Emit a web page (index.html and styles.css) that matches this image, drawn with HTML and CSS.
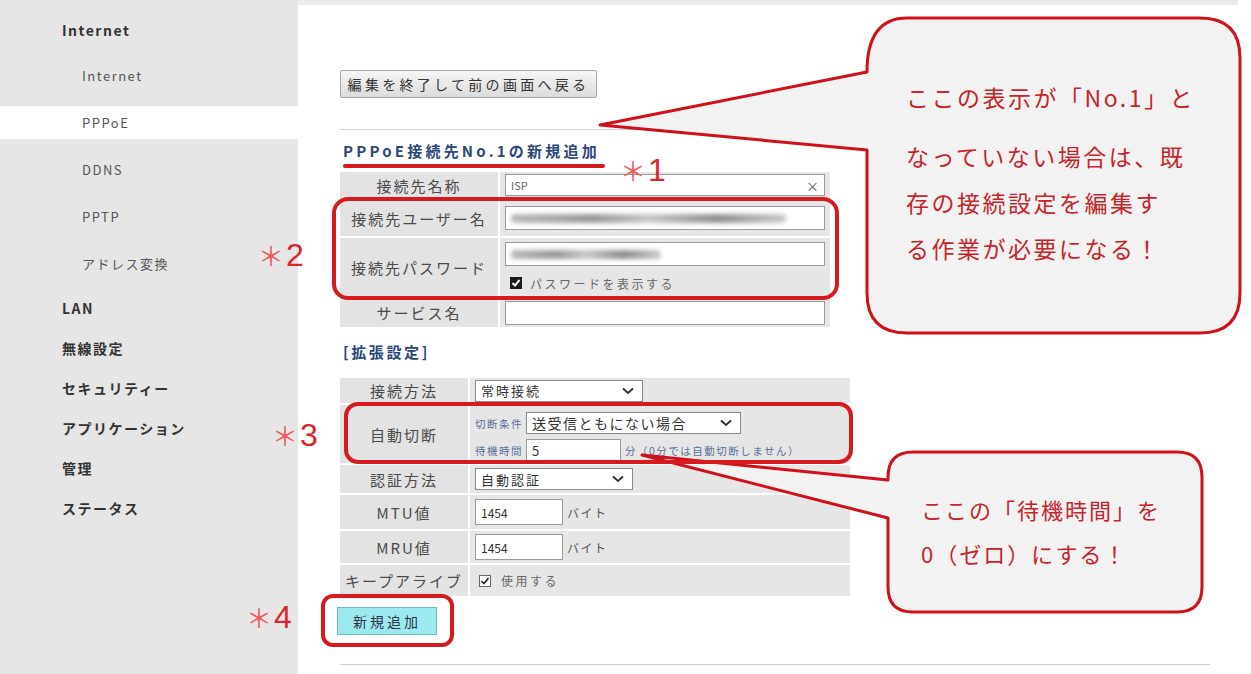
FILE: index.html
```html
<!DOCTYPE html>
<html lang="ja">
<head>
    <meta charset="UTF-8">
    <title>PPPoE接続先の新規追加</title>
    <link rel="stylesheet" href="styles.css">
</head>
<body>
    <div class="page">
        <!-- Sidebar -->
        <nav class="side">
            <div class="nav-top">Internet</div>
            <div class="nav-group">
                <div class="nav-sub">Internet</div>
                <div class="nav-sub active">PPPoE</div>
                <div class="nav-sub">DDNS</div>
                <div class="nav-sub">PPTP</div>
                <div class="nav-sub">アドレス変換</div>
            </div>
            <div class="nav-top">LAN</div>
            <div class="nav-top">無線設定</div>
            <div class="nav-top">セキュリティー</div>
            <div class="nav-top">アプリケーション</div>
            <div class="nav-top">管理</div>
            <div class="nav-top">ステータス</div>
        </nav>

        <!-- Main -->
        <main class="main">
            <div class="topband"></div>
            <div class="content">
                <button class="back-btn">編集を終了して前の画面へ戻る</button>
                <div class="rule"></div>
                <h2 class="heading">PPPoE接続先No.1の新規追加</h2>

                <div class="form form-basic">
                    <div class="label">接続先名称</div>
                    <div class="value">
                        <div class="field field-name"><span class="isp">ISP</span><span class="clear">×</span></div>
                    </div>
                    <div class="label">接続先ユーザー名</div>
                    <div class="value">
                        <div class="field field-wide"><span class="blur blur-user"></span></div>
                    </div>
                    <div class="label">接続先パスワード</div>
                    <div class="value value-stack">
                        <div class="field field-wide"><span class="blur blur-pass"></span></div>
                        <label class="check-row"><span class="check check-dark">
                            <svg width="10" height="10" viewBox="0 0 10 10"><polyline points="1.5,5 4,7.5 8.5,2" fill="none" stroke="#fff" stroke-width="2"/></svg>
                        </span>パスワードを表示する</label>
                    </div>
                    <div class="label">サービス名</div>
                    <div class="value">
                        <div class="field field-wide"></div>
                    </div>
                </div>

                <h3 class="sub-heading">[拡張設定]</h3>

                <div class="form form-ext">
                    <div class="label">接続方法</div>
                    <div class="value">
                        <div class="select select-mode">常時接続<svg class="chev" width="12" height="8" viewBox="0 0 12 8"><polyline points="1,1.5 6,6 11,1.5" fill="none" stroke="#333" stroke-width="2"/></svg></div>
                    </div>
                    <div class="label">自動切断</div>
                    <div class="value value-stack tight">
                        <div class="line">
                            <span class="mini">切断条件</span>
                            <div class="select select-cond">送受信ともにない場合<svg class="chev" width="12" height="8" viewBox="0 0 12 8"><polyline points="1,1.5 6,6 11,1.5" fill="none" stroke="#333" stroke-width="2"/></svg></div>
                        </div>
                        <div class="line">
                            <span class="mini">待機時間</span>
                            <div class="field field-wait">5</div>
                            <span class="mini hint">分（0分では自動切断しません）</span>
                        </div>
                    </div>
                    <div class="label">認証方法</div>
                    <div class="value">
                        <div class="select select-auth">自動認証<svg class="chev" width="12" height="8" viewBox="0 0 12 8"><polyline points="1,1.5 6,6 11,1.5" fill="none" stroke="#333" stroke-width="2"/></svg></div>
                    </div>
                    <div class="label">MTU値</div>
                    <div class="value">
                        <div class="field field-num">1454</div><span class="unit">バイト</span>
                    </div>
                    <div class="label">MRU値</div>
                    <div class="value">
                        <div class="field field-num">1454</div><span class="unit">バイト</span>
                    </div>
                    <div class="label">キープアライブ</div>
                    <div class="value">
                        <label class="check-row keep"><span class="check check-light">
                            <svg width="10" height="10" viewBox="0 0 10 10"><polyline points="1.5,5 4,7.5 8.5,2" fill="none" stroke="#222" stroke-width="1.6"/></svg>
                        </span>使用する</label>
                    </div>
                </div>

                <button class="add-btn">新規追加</button>
                <div class="rule rule-bottom"></div>
            </div>
        </main>
    </div>

    <!-- Annotations drawn over the page -->
    <svg class="marks" width="1251" height="674" viewBox="0 0 1251 674">
        <path class="callout" d="M 907 18 H 1200 Q 1240 18 1240 58 V 293 Q 1240 333 1200 333 H 907 Q 867 333 867 293 V 150 L 600 125 L 867 72 Q 867 18 907 18 Z"/>
        <path class="callout" d="M 913 452 H 1177 Q 1202 452 1202 477 V 587 Q 1202 612 1177 612 H 913 Q 888 612 888 587 V 518 L 642 455 L 888 480 V 477 Q 888 452 913 452 Z"/>
        <rect x="343" y="164" width="262" height="4" rx="2" fill="#d71920"/>
        <rect class="ring" x="334" y="199" width="503" height="99" rx="14"/>
        <rect class="ring" x="346" y="404" width="505" height="58" rx="12"/>
        <rect class="ring" x="323" y="596" width="129" height="49" rx="10"/>
    </svg>

    <div class="note note-1">
        <div class="note-first">ここの表示が「No.1」と</div>
        <div>なっていない場合は、既</div>
        <div>存の接続設定を編集す</div>
        <div>る作業が必要になる！</div>
    </div>
    <div class="note note-2">
        <div>ここの「待機時間」を</div>
        <div>0（ゼロ）にする！</div>
    </div>

    <span class="star star-1"><span class="ast">＊</span>1</span>
    <span class="star star-2"><span class="ast">＊</span>2</span>
    <span class="star star-3"><span class="ast">＊</span>3</span>
    <span class="star star-4"><span class="ast">＊</span>4</span>
</body>
</html>
```

FILE: styles.css
```css
body { margin: 0; font-family: "Noto Sans CJK JP", "Noto Sans", sans-serif; background: #fff; color: #444; position: relative; }
.page { display: flex; width: 1251px; height: 674px; overflow: hidden; }

/* sidebar */
.side { width: 298px; flex: none; background: #e6e6e6; padding-top: 10px; box-sizing: border-box; }
.nav-top { height: 40px; line-height: 40px; padding-left: 62px; font-size: 14px; font-weight: bold; letter-spacing: 1.5px; color: #333; }
.nav-group { display: flex; flex-direction: column; gap: 14px; padding: 9px 0 8px; }
.nav-sub { height: 33px; line-height: 33px; padding-left: 82px; font-size: 13px; letter-spacing: 1.5px; color: #555; }
.nav-sub.active { background: #fff; }

/* main */
.main { width: 940px; flex: none; }
.topband { height: 5px; background: #ebebeb; }
.content { display: flex; flex-direction: column; align-items: flex-start; padding: 0 28px 0 42px; }
.back-btn { margin-top: 65px; width: 257px; height: 28px; padding: 0; border: 1px solid #a8a8a8; border-radius: 2px; background: linear-gradient(#f6f6f6, #dcdcdc); font-family: inherit; font-size: 14px; letter-spacing: 3.3px; color: #333; }
.rule { align-self: stretch; height: 1px; margin-top: 31px; background: #cfcfcf; }
.heading { margin: 10px 0 0 3px; height: 22px; line-height: 22px; font-size: 15px; font-weight: bold; letter-spacing: 3.2px; color: #2b4778; }
.sub-heading { margin: 15px 0 0 3px; height: 20px; line-height: 20px; font-size: 15px; font-weight: bold; letter-spacing: 2.6px; color: #2b4778; }

/* forms */
.form { display: grid; gap: 2px; background: #fff; }
.form-basic { margin-top: 10px; grid-template-columns: 158px 330px; grid-template-rows: 26px 36px 58px 29px; }
.form-ext { margin-top: 16px; grid-template-columns: 128px 380px; grid-template-rows: 25px 58px 28px 34px 32px 31px; }
.label { background: #e3e3e3; display: flex; align-items: center; justify-content: center; font-size: 15px; letter-spacing: 2px; color: #4a4a4a; white-space: nowrap; }
.value { background: #e6e6e6; display: flex; align-items: center; padding-left: 5px; }
.value-stack { flex-direction: column; align-items: flex-start; justify-content: flex-start; padding-top: 4px; gap: 8px; }
.value-stack.tight { padding-top: 7px; gap: 5px; }

.field { box-sizing: border-box; height: 24px; background: #fff; border: 1px solid #9a9a9a; display: flex; align-items: center; padding: 0 5px; font-size: 13px; color: #333; position: relative; overflow: hidden; }
.field-name { width: 320px; height: 22px; justify-content: space-between; }
.field-wide { width: 320px; }
.isp { font-size: 11px; color: #666; }
.clear { font-size: 13px; color: #555; }
.blur { display: block; height: 9px; background: linear-gradient(90deg, #bbb, #999 30%, #c8c8c8 50%, #8f8f8f 75%, #ccc); filter: blur(2px); border-radius: 4px; }
.blur-user { width: 275px; }
.blur-pass { width: 150px; }

.check-row { display: flex; align-items: center; gap: 8px; font-size: 12px; letter-spacing: 2.5px; color: #666; height: 18px; padding-left: 5px; }
.check { width: 12px; height: 12px; display: flex; align-items: center; justify-content: center; box-sizing: border-box; }
.check-dark { background: #1a1a1a; }
.check-light { background: #fff; border: 1px solid #666; }
.keep { padding-left: 4px; gap: 10px; }

.select { box-sizing: border-box; height: 22px; background: #fff; border: 1px solid #8a8a8a; display: flex; align-items: center; justify-content: space-between; padding: 0 8px 0 5px; font-size: 13px; letter-spacing: 2px; color: #333; }
.select-mode { width: 168px; }
.select-auth { width: 158px; }
.select-cond { width: 215px; font-size: 14px; letter-spacing: 1.5px; }
.line { display: flex; align-items: center; gap: 3px; height: 22px; }
.mini { font-size: 10.5px; letter-spacing: 1.5px; color: #5a6f9a; }
.field-wait { width: 95px; height: 22px; }
.hint { margin-left: 1px; }
.field-num { width: 88px; height: 26px; font-size: 12px; }
.unit { margin-left: 4px; font-size: 12px; letter-spacing: 1.5px; color: #555; }

.add-btn { margin-top: 11px; margin-left: -3px; width: 100px; height: 28px; padding: 0; border: 1px solid #67bfc6; background: #9beaf0; font-family: inherit; font-size: 14px; letter-spacing: 3px; color: #334; }
.rule-bottom { margin-top: 29px; }

/* annotations */
.marks { position: absolute; left: 0; top: 0; pointer-events: none; }
.callout { fill: #f2f2f2; stroke: #d0101a; stroke-width: 3; stroke-linejoin: round; }
.ring { fill: none; stroke: #d71920; stroke-width: 4; }
.note { position: absolute; color: #c8242b; white-space: nowrap; }
.note-1 { left: 906px; top: 74px; font-size: 23px; letter-spacing: 2.5px; line-height: 46px; }
.note-1 .note-first { margin-bottom: 13px; }
.note-2 { left: 921px; top: 487px; font-size: 22px; letter-spacing: 2px; line-height: 44px; }
.star { position: absolute; font-size: 32px; line-height: 32px; color: #d9262c; font-family: "Liberation Sans", sans-serif; }
.star .ast { font-family: "Noto Sans CJK JP", sans-serif; font-size: 26px; color: #ee5a5e; margin-right: 2px; }
.star-1 { left: 620px; top: 154px; }
.star-2 { left: 258px; top: 239px; }
.star-3 { left: 272px; top: 419px; }
.star-4 { left: 246px; top: 601px; }
```
